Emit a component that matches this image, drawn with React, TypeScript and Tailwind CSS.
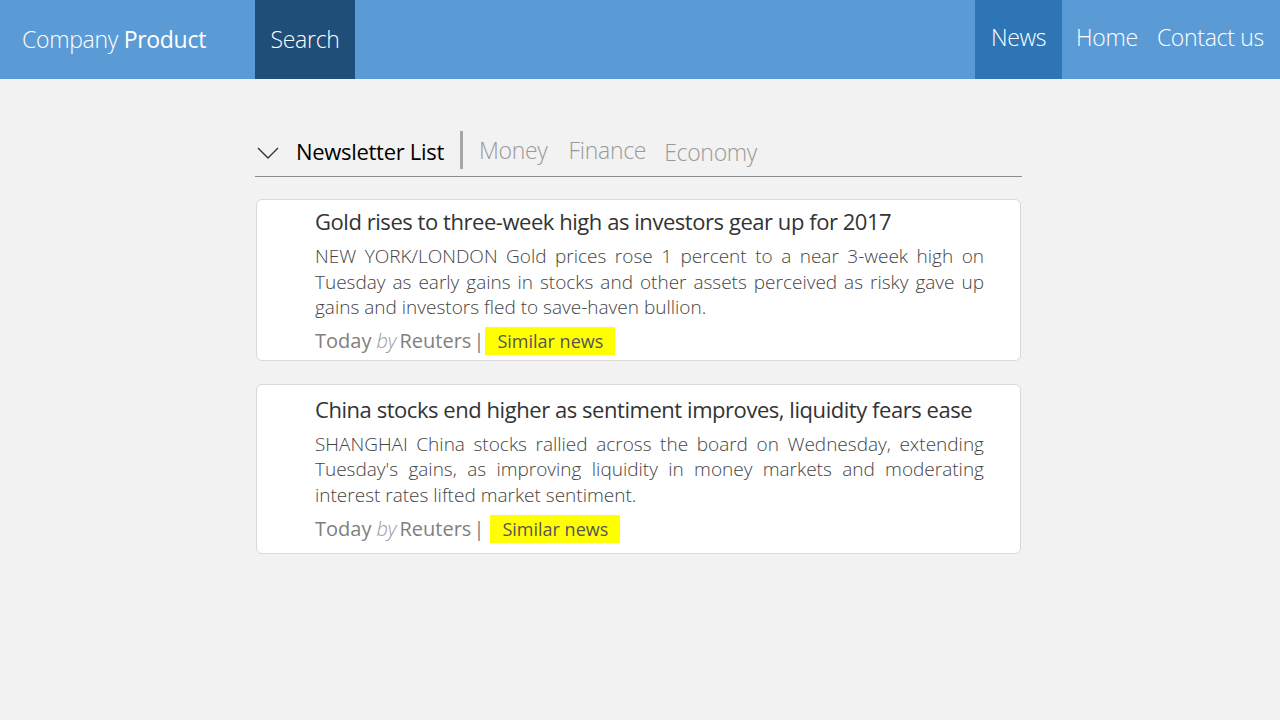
type Article = {
  title: string
  body: string
  card: string
  meta: string
  gap: string
}

const ARTICLES: Article[] = [
  {
    title: 'Gold rises to three-week high as investors gear up for 2017',
    body: 'NEW YORK/LONDON Gold prices rose 1 percent to a near 3-week high on Tuesday as early gains in stocks and other assets perceived as risky gave up gains and investors fled to save-haven bullion.',
    card: 'pt-[5px] pb-[5px]',
    meta: 'mt-[6px]',
    gap: 'ml-[1px]',
  },
  {
    title: 'China stocks end higher as sentiment improves, liquidity fears ease',
    body: "SHANGHAI China stocks rallied across the board on Wednesday, extending Tuesday's gains, as improving liquidity in money markets and moderating interest rates lifted market sentiment.",
    card: 'pt-[8px] pb-[10px]',
    meta: 'mt-[7px]',
    gap: 'ml-[6px]',
  },
]

function ArticleCard({ a }: { a: Article }) {
  return (
    <div className={`rounded-md border border-[#d9d9d9] bg-white pl-[58px] pr-[36px] ${a.card}`}>
      <h3 className="whitespace-nowrap text-[22px] leading-[32px] tracking-[-0.45px] text-[#333]">{a.title}</h3>
      <p className="mt-[7px] text-justify text-[19px] font-light leading-[25.5px] text-[#444]">{a.body}</p>
      <div className={`${a.meta} flex items-center text-[20px] leading-[28px] text-[#808080]`}>
        <span>Today</span>
        <span className="ml-[5px] font-light italic text-[#999]">by</span>
        <span className="ml-[3px]">Reuters</span>
        <span className="ml-[2px]">|</span>
        <span className={`${a.gap} bg-[#ffff00] px-[12px] text-[18px] text-[#555]`}>Similar news</span>
      </div>
    </div>
  )
}

export default function App() {
  return (
    <div className="min-h-screen bg-[#f2f2f2] font-['Open_Sans',sans-serif]">
      <header className="flex h-[79px] items-stretch bg-[#5b9bd5] text-white">
        <div className="flex items-center pl-[22px] text-[23px] font-light tracking-[-0.3px]">
          Company&nbsp;<span className="font-normal">Product</span>
        </div>
        <div className="ml-[49px] flex w-[100px] items-center justify-center bg-[#1f4e79] text-[23px] font-light tracking-[-0.3px]">
          Search
        </div>
        <nav className="ml-auto flex items-stretch text-[23px] font-light tracking-[-0.3px]">
          <a className="flex w-[87px] items-center justify-center bg-[#2e75b6] pb-[4px]">News</a>
          <a className="flex items-center pb-[4px] pl-[14px] pr-[9px]">Home</a>
          <a className="flex items-center pb-[4px] pl-[10px] pr-[16px]">Contact us</a>
        </nav>
      </header>

      <main className="ml-[255px] w-[767px] pt-[52px]">
        <div className="flex items-end border-b border-[#8c8c8c] pb-[7px]">
          <svg className="mb-[9px] ml-[2px] h-[14px] w-[22px] text-[#333]" viewBox="0 0 22 14" fill="none">
            <polyline points="1,2 11,12 21,2" stroke="currentColor" strokeWidth="1.4" />
          </svg>
          <span className="mb-[2px] ml-[17px] text-[22px] leading-[32px] tracking-[-0.3px] text-black">Newsletter List</span>
          <span className="ml-[16px] h-[38px] w-[3px] bg-[#a6a6a6]" />
          <span className="mb-[3px] ml-[16px] text-[23px] font-light leading-[32px] tracking-[-0.3px] text-[#999]">Money</span>
          <span className="mb-[3px] ml-[21px] text-[23px] font-light leading-[32px] tracking-[-0.3px] text-[#999]">Finance</span>
          <span className="mb-[1px] ml-[18px] text-[23px] font-light leading-[32px] tracking-[-0.3px] text-[#999]">Economy</span>
        </div>

        <div className="mt-[22px] flex flex-col gap-[23px] px-[1px]">
          {ARTICLES.map((a) => (
            <ArticleCard key={a.title} a={a} />
          ))}
        </div>
      </main>
    </div>
  )
}
